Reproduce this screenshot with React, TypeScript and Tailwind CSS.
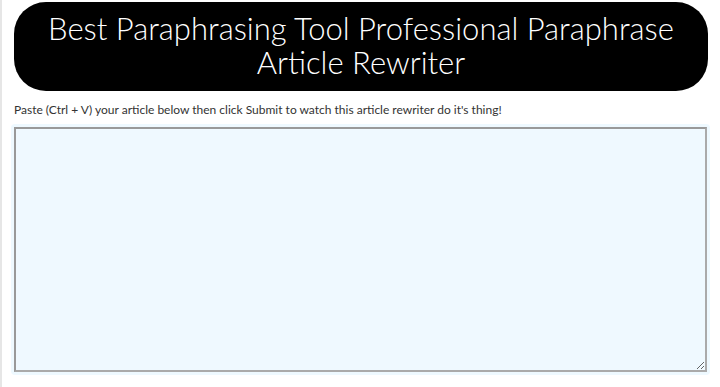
export default function App() {
	return (
		<div className="w-[720px] h-[387px] bg-white border-l-2 border-[#e6e6e6] font-['Lato',sans-serif] overflow-hidden">
			<div className="pt-[2px] px-[12px]">
				<h1 className="bg-black text-white text-center rounded-[32px] h-[89px] pt-[9px] text-[31px] leading-[34px] font-light">
					Best Paraphrasing Tool Professional Paraphrase
					<br />
					Article Rewriter
				</h1>
				<p className="mt-[10px] text-[12px] leading-[18px] text-[#333]">
					Paste (Ctrl + V) your article below then click Submit to watch this article rewriter do it's thing!
				</p>
				<div className="mt-[5px] ml-[-3px] mr-[-2px] p-[3px] rounded-[4px] bg-[#eef9ff]">
					<textarea className="block w-full h-[245px] bg-[#eff9ff] border-2 border-t-[#999] border-l-[#999] border-r-[#aaa] border-b-[#aaa] border-solid outline-none resize-y" />
				</div>
			</div>
		</div>
	);
}
